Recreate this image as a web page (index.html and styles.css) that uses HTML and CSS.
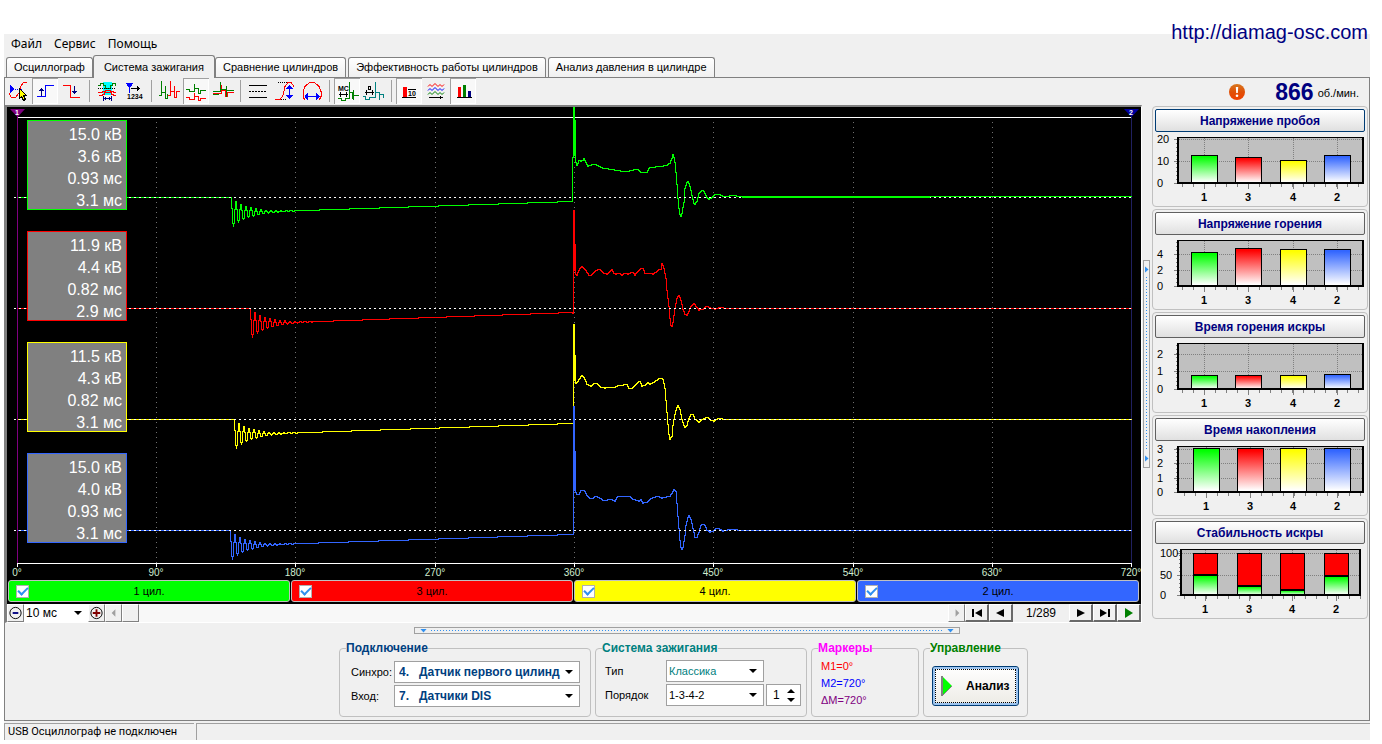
FILE: index.html
```html
<!DOCTYPE html>
<html lang="ru">
<head>
<meta charset="utf-8">
<title>USB Осциллограф</title>
<link rel="stylesheet" href="styles.css">
</head>
<body>
<div class="app">
  <a class="site-link" href="http://diamag-osc.com">http://diamag-osc.com</a>

  <nav class="menu">
    <button>Файл</button>
    <button>Сервис</button>
    <button>Помощь</button>
  </nav>

  <div class="tabs" role="tablist">
    <button class="tab" role="tab">Осциллограф</button>
    <button class="tab tab-active" role="tab" aria-selected="true">Система зажигания</button>
    <button class="tab" role="tab">Сравнение цилиндров</button>
    <button class="tab" role="tab">Эффективность работы цилиндров</button>
    <button class="tab" role="tab">Анализ давления в цилиндре</button>
  </div>

  <main class="page">
    <div class="toolbar">
      <div class="tools">
        <button class="tool" aria-label="Курсор"><svg viewBox="0 0 26 26"><path d="M5 7v8l5-4z" fill="#00f"/><path d="M10 11.500h8" stroke="#00f" stroke-dasharray="1 1"/><path d="M4 15l2 4h5l3-4 2-7 3-4h3" stroke="#f00"/><path d="M14.500 10.500v10l2-2 2 4 2-1-2-4h3z" fill="#ff0" stroke="#000"/></svg></button>
        <button class="tool pressed" aria-label="Фронт"><svg viewBox="0 0 26 26"><path d="M5 18.500h8.500v-11h8" stroke="#00f"/><path d="M9.500 18v-8M7 12.500h5M8 11.500h3" stroke="#000080"/></svg></button>
        <button class="tool" aria-label="Спад"><svg viewBox="0 0 26 26"><path d="M4 7.500h7.500v12h9" stroke="#f00"/><path d="M15.500 8v8M13 13.500h5M14 14.500h3" stroke="#000080"/></svg></button>
        <span class="sep"></span>
        <button class="tool" aria-label="Окно измерения"><svg viewBox="0 0 26 26"><path d="M9 4h9v13H9z" fill="#0ff"/><path d="M4 7.500h2v-2h3v2h2v3h5v-3h2v-2h3v2h1" stroke="#008000"/><path d="M4 10.500h18" stroke="#000" stroke-dasharray="1 1"/><path d="M4 14.500h4v-1h3v-1h5v1h3v1h3M5 17.500h3v-1h2v-2h7v2h2v1h3" stroke="#f00"/><path d="M9.500 18v5M17.500 18v5M10 20.500h7M11.500 19v3M15.500 19v3" stroke="#000080"/></svg></button>
        <button class="tool" aria-label="Нумерация"><svg viewBox="0 0 26 26"><path d="M5 5h7l-2 4H7z" fill="#00f"/><path d="M8.500 6v9" stroke="#00f"/><path d="M10 10.500h9M16.500 8v5M17.500 9v3" stroke="#000"/><text x="6" y="21" class="mini">1234</text></svg></button>
        <span class="sep"></span>
        <button class="tool" aria-label="Последовательно"><svg viewBox="0 0 26 26"><path d="M3 17.500h2.500V3v11.500h4V8v12.500h2v-5" stroke="#008000"/><path d="M12 17.500h2.500V3v10.500h4V8v11.500h2v-6h3" stroke="#f00"/></svg></button>
        <button class="tool pressed" aria-label="Каскад"><svg viewBox="0 0 26 26"><path d="M3 11.500h3v2h5.500V6v4.500h4v5h2v-3h5" stroke="#008000"/><path d="M3 19.500h3v2h5.500V15v3.500h4v4h2v-2h5" stroke="#f00"/></svg></button>
        <button class="tool" aria-label="Наложение"><svg viewBox="0 0 26 26"><path d="M3 15.500h8.500V7v5.500h4v6h2v-4h6" stroke="#f00"/><path d="M3 13.500h7.500V4v7.500h6v7v-11v5h7M3 16.500h6" stroke="#008000"/></svg></button>
        <span class="sep"></span>
        <button class="tool" aria-label="Линии"><svg viewBox="0 0 26 26"><path d="M4 7.500h18M4 19.500h18" stroke="#000"/><path d="M4 13.500h18" stroke="#000" stroke-dasharray="2 1"/></svg></button>
        <button class="tool" aria-label="Амплитуда"><svg viewBox="0 0 26 26"><path d="M6 4.500h10M5 21.500h10" stroke="#000" stroke-dasharray="1 1"/><path d="M3 21.500h5l3-4 2-9 3-4h3l3 4" stroke="#f00"/><path d="M17.500 7v14M14 10.500h7M15 9.500h5M16 8.500h3M14 17.500h7M15 18.500h5M16 19.500h3" stroke="#00f"/></svg></button>
        <button class="tool" aria-label="Длительность"><svg viewBox="0 0 26 26"><path d="M6 21.500l-1-1-1-2v-5l2-5 2-2 3-2h4l3 2 2 2 2 5v5l-1 2-1 1" stroke="#f00"/><path d="M6 18.500h15M8.500 15v7M7.500 16v5M6.500 17v3M17.500 15v7M18.500 16v5M19.500 17v3" stroke="#00f"/></svg></button>
        <span class="sep"></span>
        <button class="tool pressed" aria-label="Миллисекунды"><svg viewBox="0 0 26 26"><path d="M4 20.500h3v2h4v-2h4.500V4v10.500h3v6h1v-3h5M19.500 12v10" stroke="#008000"/><path d="M5 16.500h9M6.500 14v5M12.500 14v5" stroke="#000"/><text x="4" y="13" class="mini">МС</text></svg></button>
        <button class="tool" aria-label="Градусы"><svg viewBox="0 0 26 26"><path d="M2 18.500h2v3h4v-2h6.500V4v10.500h4v7v-5h4v3" stroke="#008080"/><path d="M4 14.500h9M5.500 12v5M11.500 12v5" stroke="#000"/><path d="M7.500 8.500h2v3h-2z" stroke="#000"/></svg></button>
        <span class="sep"></span>
        <button class="tool pressed" aria-label="Числа"><svg viewBox="0 0 26 26"><path d="M7 9h4v10H7z" fill="#f00"/><path d="M6 19.500h14M12 11.500h8" stroke="#000"/><text x="12" y="18" class="mini">10</text></svg></button>
        <button class="tool" aria-label="Кривые"><svg class="soft" viewBox="0 0 26 26"><path d="M5 8.500l2-2 2 2 3-3 3 3 2-2 2 2 2-2" stroke="#f00"/><path d="M5 12.500l2-2 2 2 3-3 3 3 2-2 2 2 2-2" stroke="#00f"/><path d="M5 16.500l2-2 2 2 3-3 3 3 2-2 2 2 2-2" stroke="#008000"/><path d="M6 19.500h14M17.500 18v3" stroke="#000"/></svg></button>
        <button class="tool pressed" aria-label="Гистограммы"><svg viewBox="0 0 26 26"><path d="M8 9h3v10H8z" fill="#f00"/><path d="M13 7h3v12h-3z" fill="#008000"/><path d="M18 13h3v6h-3z" fill="#000080"/><path d="M7 19.500h15" stroke="#000"/></svg></button>
      </div>
      <div class="rpm">
        <svg class="alert" viewBox="0 0 16 16"><defs><linearGradient id="alertFill" x1="0" y1="0" x2="0" y2="1"><stop offset="0" stop-color="#d87820"/><stop offset=".5" stop-color="#e05008"/><stop offset="1" stop-color="#f04000"/></linearGradient></defs><circle cx="8" cy="8" r="8" fill="url(#alertFill)"/><path d="M6.800 3h2.400l-.4 6H7.200z" fill="#fff"/><circle cx="8" cy="11.800" r="1.300" fill="#fff"/></svg>
        <strong>866</strong><span>об./мин.</span>
      </div>
    </div>

    <div class="workspace">
      <section class="scope">
        <div class="screen">
          <svg id="waves" class="waves" viewBox="7 107 1134 472"></svg>
          <div class="cylinders">
            <label class="cyl green"><input type="checkbox" checked><span>1 цил.</span></label>
            <label class="cyl red"><input type="checkbox" checked><span>3 цил.</span></label>
            <label class="cyl yellow"><input type="checkbox" checked><span>4 цил.</span></label>
            <label class="cyl blue"><input type="checkbox" checked><span>2 цил.</span></label>
          </div>
        </div>
        <div class="timeline">
          <button class="flat" aria-label="Уменьшить"><svg viewBox="0 0 16 16"><circle cx="8" cy="8" r="6" fill="none" stroke="#000"/><path d="M5 8h6" stroke="#000080" stroke-width="2"/></svg></button>
          <div class="combo scale"><select aria-label="Масштаб"><option>10 мс</option></select></div>
          <button class="flat" aria-label="Увеличить"><svg viewBox="0 0 16 16"><circle cx="8" cy="8" r="6" fill="none" stroke="#000"/><path d="M4 8h8M8 4v8" stroke="#800000" stroke-width="2"/></svg></button>
          <button class="flat" aria-label="Влево"><svg viewBox="0 0 16 16"><path d="M10 4v8L6 8z" fill="#a0a0a0"/></svg></button>
          <div class="track"><span class="thumb"></span></div>
          <button class="flat" aria-label="Вправо"><svg viewBox="0 0 16 16"><path d="M7 4v8l4-4z" fill="#a0a0a0"/></svg></button>
          <button class="nav" aria-label="Первый"><svg viewBox="0 0 16 16"><path d="M3 4h2v8H3zM13 4v8L6 8z"/></svg></button>
          <button class="nav" aria-label="Предыдущий"><svg viewBox="0 0 16 16"><path d="M11 4v8L3 8z"/></svg></button>
          <output class="counter">1/289</output>
          <button class="nav" aria-label="Следующий"><svg viewBox="0 0 16 16"><path d="M4 4v8l8-4z"/></svg></button>
          <button class="nav" aria-label="Последний"><svg viewBox="0 0 16 16"><path d="M3 4v8l7-4zM11 4h2v8h-2z"/></svg></button>
          <button class="nav" aria-label="Пуск"><svg viewBox="0 0 16 16"><path d="M4 3v10l8-5z" fill="#008000"/></svg></button>
        </div>
      </section>

      <div class="splitter-v"><i></i><b></b><i></i></div>

      <aside id="charts" class="charts"></aside>
    </div>

    <div class="splitter-h"><i></i><b></b><i></i></div>

    <form class="panels">
      <fieldset class="connect">
        <legend>Подключение</legend>
        <div class="fields">
          <label for="sync">Синхро:</label>
          <div class="combo"><select id="sync"><option>4. &nbsp; Датчик первого цилинд</option></select></div>
          <label for="input">Вход:</label>
          <div class="combo"><select id="input"><option>7. &nbsp; Датчики DIS</option></select></div>
        </div>
      </fieldset>
      <fieldset class="ignition">
        <legend>Система зажигания</legend>
        <div class="fields">
          <label for="kind">Тип</label>
          <div class="combo kind"><select id="kind"><option>Классика</option></select></div>
          <label for="order">Порядок</label>
          <div class="pair">
            <div class="combo"><select id="order"><option>1-3-4-2</option></select></div>
            <div class="spin"><input type="text" value="1" aria-label="Номер цилиндра"><svg viewBox="0 0 9 16"><path d="M0 6h8L4 2zM0 11h8l-4 4z"/></svg></div>
          </div>
        </div>
      </fieldset>
      <fieldset class="markers">
        <legend>Маркеры</legend>
        <p class="m1">M1=0°</p>
        <p class="m2">M2=720°</p>
        <p class="dm">ΔM=720°</p>
      </fieldset>
      <fieldset class="control">
        <legend>Управление</legend>
        <button type="button" class="analyze"><svg viewBox="0 0 12 20"><path d="M1 0v20" stroke="#808080" stroke-width="2"/><path d="M2 1v18l9-9z" fill="#0f0"/><path d="M2 19l9-9" stroke="#808080"/></svg><span>Анализ</span></button>
      </fieldset>
    </form>
  </main>

  <footer class="status">
    <div class="cell">USB Осциллограф не подключен</div>
    <div class="cell rest"></div>
  </footer>
</div>
<script src="script.js"></script>
</body>
</html>
```
FILE: styles.css
```css
* { box-sizing: border-box; }

body {
  margin: 0;
  padding: 34px 12px 4px 4px;
  background: #fff;
  color: #000;
  font: 11px/14px "Liberation Sans", Arial, sans-serif;
}

button, select, input { font: inherit; color: inherit; }
button { padding: 0; margin: 0; }

.app {
  position: relative;
  min-width: 1100px;
  background: #f0f0f0;
}

.site-link {
  position: absolute;
  right: 2px;
  top: -14px;
  font-size: 20px;
  line-height: 24px;
  color: #000080;
  text-decoration: none;
}

/* menu and tabs */
.menu {
  display: flex;
  gap: 12px;
  height: 20px;
  padding: 0 7px;
}
.menu button {
  border: 0;
  background: none;
  font: 12px/20px "Noto Sans", sans-serif;
}

.tabs {
  display: flex;
  align-items: flex-end;
  height: 23px;
  padding-left: 2px;
}
.tab {
  height: 20px;
  margin-right: 2px;
  padding: 0 7px;
  border: 1px solid #808080;
  border-bottom: 0;
  border-radius: 3px 3px 0 0;
  background: linear-gradient(#fff, #f0f0f0);
  line-height: 19px;
}
.tab:first-child { margin-right: 0; }
.tab-active {
  position: relative;
  height: 23px;
  margin: 0 0 -1px;
  padding: 0 10px;
  background: #f0f0f0;
}

.page { border: 1px solid #808080; padding-bottom: 3px; }

/* toolbar */
.toolbar {
  display: flex;
  justify-content: space-between;
  height: 27px;
}
.tools { display: flex; gap: 1px; }
.tool {
  width: 26px;
  height: 26px;
  border: 0;
  background: none;
}
.tool svg { display: block; width: 26px; height: 26px; fill: none; shape-rendering: crispEdges; }
.tool .soft { shape-rendering: auto; }
.pressed {
  background: #f8f8f8;
  box-shadow: inset 1px 1px #a0a0a0, inset -1px -1px #fff;
}
.sep {
  width: 7px;
  height: 22px;
  margin-top: 2px;
  background: linear-gradient(#a0a0a0, #a0a0a0) 3px 0 / 1px 100% no-repeat;
}
.mini { font: bold 7px "Liberation Sans", sans-serif; fill: #000; }

.rpm {
  display: flex;
  align-items: center;
  padding-right: 10px;
}
.alert { width: 16px; height: 16px; margin-right: 30px; }
.rpm strong {
  margin-right: 4px;
  color: #000080;
  font-size: 23px;
  line-height: 26px;
}
.rpm span { padding-top: 3px; }

/* oscilloscope */
.workspace { display: flex; }
.scope {
  flex: 1;
  min-width: 0;
  border: solid #808080;
  border-width: 2px 1px 1px 2px;
  border-right-color: #fff;
  border-bottom-color: #fff;
}
.screen { background: #000; }
.waves { display: block; width: 100%; }
.waves path, .waves rect { shape-rendering: crispEdges; fill: none; }
.waves .solid { fill: #808080; }
.waves text { font-family: "Liberation Sans", Arial, sans-serif; }
.reading { font-size: 16px; fill: #fff; text-anchor: end; }
.degree { font-size: 10px; fill: #d0ecd0; text-anchor: middle; }
.flag { font-size: 7px; font-weight: bold; fill: #fff; text-anchor: middle; }

.cylinders {
  display: grid;
  grid-template-columns: repeat(4, 1fr);
  gap: 1px;
  padding: 1px 2px 2px 1px;
}
.cyl {
  display: flex;
  align-items: center;
  height: 22px;
  padding: 0 7px;
  border: 1px solid #c0c0c0;
  border-radius: 3px;
}
.cyl span { flex: 1; padding-right: 13px; text-align: center; }
.cyl input {
  appearance: none;
  display: grid;
  place-items: center;
  width: 13px;
  height: 13px;
  margin: 0;
  border: 1px solid #b0b0b0;
  background: #fff;
}
.cyl input:checked::after {
  content: "";
  width: 8px;
  height: 4px;
  margin-bottom: 3px;
  border: solid #3090f0;
  border-width: 0 0 2px 2px;
  rotate: -45deg;
}
.green { background: #0f0; }
.red { background: #f00; }
.yellow { background: #ff0; }
.blue { background: #36f; }

.timeline { display: flex; height: 18px; }
.flat, .nav, .thumb {
  border: 1px solid;
  border-color: #fff #808080 #808080 #fff;
  background: #f0f0f0;
}
.flat { width: 17px; }
.nav {
  width: 24px;
  border-width: 1px 2px 2px 1px;
  border-color: #fff #696969 #696969 #fff;
}
.flat svg, .nav svg { display: block; width: 16px; height: 16px; margin: auto; }
.flat svg { width: 15px; }
.thumb { display: block; width: 17px; height: 18px; }
.track { flex: 1; background: #f8f8f8; }
.counter {
  width: 56px;
  background: #f0f0f0;
  text-align: center;
  font-size: 12px;
  line-height: 18px;
}

/* drop-downs */
.combo {
  position: relative;
  display: flex;
  height: 22px;
  border: 1px solid #a0a0a0;
  background: #fff;
}
.combo select {
  appearance: none;
  width: 100%;
  padding: 0 18px 0 4px;
  border: 0;
  border-radius: 0;
  background: none;
  outline: 0;
}
.combo::after {
  content: "";
  position: absolute;
  right: 6px;
  top: 8px;
  width: 8px;
  height: 4px;
  background: #000;
  clip-path: polygon(0 0, 100% 0, 50% 100%);
  pointer-events: none;
}
.scale { width: 64px; height: 18px; border: 0; font-size: 12px; }
.scale select { padding-left: 2px; }
.scale::after { top: 7px; }

/* splitters */
.splitter-v, .splitter-h {
  display: flex;
  align-items: center;
  border: 1px solid #a0a0a0;
}
.splitter-v {
  flex-direction: column;
  align-self: center;
  width: 7px;
  height: 208px;
  margin: 0 2px 0 1px;
  padding: 5px 0;
}
.splitter-h {
  width: 546px;
  height: 7px;
  margin: 4px auto 0;
  padding: 0 5px;
}
.splitter-v b { flex: 1; width: 1px; margin: 4px 0; background: repeating-linear-gradient(#3090f0 0 1px, transparent 1px 3px); }
.splitter-h b { flex: 1; height: 1px; margin: 0 4px; background: repeating-linear-gradient(90deg, #3090f0 0 1px, transparent 1px 3px); }
.splitter-v i { width: 4px; height: 7px; background: #3090f0; clip-path: polygon(0 0, 100% 50%, 0 100%); }
.splitter-h i { width: 7px; height: 4px; background: #3090f0; clip-path: polygon(0 0, 100% 0, 50% 100%); }

/* bar charts */
.charts {
  display: flex;
  flex-direction: column;
  gap: 2px;
  width: 216px;
  margin: 1px 1px 0 0;
}
.chart {
  height: 101px;
  padding-top: 2px;
  border: 1px solid #c0c0c0;
  border-radius: 4px;
}
.chart button {
  display: block;
  width: 210px;
  height: 23px;
  margin: 0 auto;
  border: 1px solid #606060;
  border-radius: 2px;
  background: linear-gradient(#fff, #e0e0e0);
  color: #000080;
  font-size: 12px;
  font-weight: bold;
}
.chart:first-child button { border-color: #003c74; }
.chart svg { display: block; width: 214px; height: 73px; shape-rendering: crispEdges; }
.chart text { font-size: 11px; fill: #000; }
.chart .cat { font-weight: bold; text-anchor: middle; }

/* bottom panels */
.panels {
  display: flex;
  justify-content: center;
  gap: 4px;
  padding: 7px 7px 0 0;
}
fieldset {
  min-width: 0;
  height: 76px;
  margin: 0;
  padding: 6px 10px 0 11px;
  border: 1px solid #c0c0c0;
  border-radius: 4px;
}
legend {
  margin-left: -5px;
  padding: 0;
  font-weight: bold;
  font-size: 12px;
  line-height: 14px;
  white-space: nowrap;
}
.fields {
  display: grid;
  align-items: center;
  gap: 2px 0;
}
.connect { width: 252px; }
.connect .fields { grid-template-columns: 43px 1fr; }
.connect legend { color: #004080; }
.connect select { font-weight: bold; font-size: 12px; color: #004080; }
.ignition { width: 212px; padding: 5px 5px 0 9px; }
.ignition legend { margin-left: -3px; color: #008080; }
.ignition .fields { grid-template-columns: 61px 1fr; }
.ignition select { padding-left: 2px; }
.kind { width: 98px; }
.kind select { color: #008080; }
.pair { display: flex; gap: 2px; }
.pair .combo { flex: 1; }
.spin {
  display: flex;
  align-items: center;
  width: 35px;
  height: 22px;
  border: 1px solid #a0a0a0;
  background: #fff;
}
.spin input { width: 20px; padding: 0 0 0 6px; border: 0; font-size: 12px; outline: 0; }
.spin svg { width: 9px; height: 16px; }
.markers { width: 108px; padding: 4px 9px 0; }
.markers legend { margin-left: -3px; color: #f0f; }
.markers p { margin: 0 0 3px; }
.m1 { color: #f00; }
.m2 { color: #00f; }
.dm { color: #800080; }
.control { width: 105px; padding: 11px 8px 0; }
.control legend { margin-left: -2px; color: #008000; }
.analyze {
  display: flex;
  align-items: center;
  gap: 13px;
  width: 87px;
  height: 40px;
  padding: 0 8px;
  border: 1px solid #003c74;
  border-radius: 3px;
  outline: 1px dotted #000;
  outline-offset: -4px;
  background: linear-gradient(#fff, #ecebe5);
  box-shadow: inset 0 0 0 2px #9cc4f0;
  font-size: 12px;
  font-weight: bold;
}
.analyze svg { width: 12px; height: 20px; }

/* status bar */
.status { display: flex; gap: 2px; margin-top: 2px; }
.cell {
  width: 190px;
  height: 17px;
  padding-left: 3px;
  border: solid #a0a0a0;
  border-width: 1px 0 0 1px;
  font: 11px/15px Roboto, sans-serif;
  white-space: nowrap;
}
.rest { flex: 1; }
```
FILE: script.js
```js
// ---- oscilloscope screen ----
const LEFT = 17, RIGHT = 1131, STEP = 139.3;
const gridX = i => Math.floor(LEFT + 0.2 + i * STEP) + 0.5;

const traces = [
  { color: '#00ff00', base: 197.5, start: 230, tail: 196.5, cover: true, values: ['15.0 кВ', '3.6 кВ', '0.93 мс', '3.1 мс'],
    burn: '572,201 572.5,157 573.5,157 573.5,107 574.5,107 574.5,155 575.5,119 575.5,162 576,165 577,163 578,160 580,161 582,160 583,158 585,162 587,166 590,165 594,164 598,166 602,168 608,169 614,170 620,171 628,171 632,170 637,169 640,172 646,172 648,168 654,167 662,166 666,165 669,163 671,158 672.5,154 673.5,157 674,162 675,172 676,184 677,198 678,208 679,214 680,216 681,213 683,202 684.5,188 686,182 687.5,181 689,186 691,195 693,203 694,204 696,201 698,193 700,191 702,190 704,193 706,197 708,199 710,198 713,195 716,194 720,195 724,197 730,195.5 742,196.5' },
  { color: '#ff0000', base: 308.5, start: 249, tail: 308.5, values: ['11.9 кВ', '4.4 кВ', '0.82 мс', '2.9 мс'],
    burn: '572,313 573,308 573.5,210 574.5,210 574.5,270 575.5,243 575.5,274 576,275 577,272 579,268 581,266.5 583,268 586,272 588,275 590,275 593,272 596,270 599,269 601,271 603,273 606,274 608,272 611,269 613,273 615,274 618,273 621,275 624,273 627,274 629,273 632,272 634,275 636,272 639,269 642,268 644,273 648,273 652,274 655,272 657,270 660,269 661,263 663,268 665,278 666,290 668,306 669,318 670,325 671,326 672,322 674,308 676,298 678,295 680,300 682,309 684,314 686,315 688,311 690,306 693,303 695,306 698,310 702,309 706,306 710,308 714,309 720,307 724,308.5' },
  { color: '#ffff00', base: 419.5, start: 233, tail: 419.5, values: ['11.5 кВ', '4.3 кВ', '0.82 мс', '3.1 мс'],
    burn: '572,423 573.5,423 573.5,324 574.5,324 574.5,380 575.5,354 575.5,383 577,381 579,378 581,375 583,377 586,384 590,386 593,383 597,384 600,387 604,388 608,387 614,387 618,385 622,385 626,384 628,388 631,388 635,384 639,381 641,386 644,385 647,382 649,384 653,382 656,380 659,378 662,379 664,388 665,400 666,412 667,424 668,434 669,439 671,436 672,425 674,414 676,407 677.5,405 679,409 681,419 683,425 684.5,427 686,425 688,418 690,414 692,414 694,419 698,422 702,419 706,417 710,420 713,421 718,418 723,419.5' },
  { color: '#3366ff', base: 530.5, start: 229, tail: 530.5, values: ['15.0 кВ', '4.0 кВ', '0.93 мс', '3.1 мс'],
    burn: '572,534 573,530 573.5,406 574.5,406 574.5,490 575.5,450 575.5,492 576,494 578,494 580,490 583,490 586,495 589,498 592,498 595,496 599,498 602,500 606,500 610,499 614,501 616,497 620,496 629,496 632,499 638,501 640,499 642,503 646,502 649,499 654,497 657,496 661,498 665,497 669,496 671,493 673,489 675,491 676,503 677,516 678,528 679,540 680,547 681,549 682,547 684,535 685,525 687,517 688,515 690,519 692,528 694,537 696,537 698,532 700,525 702,524 704,525 706,530 709,532 712,531 715,528 719,529 722,531 730,529 740,530.5' }
];

// Coil charge: ringing after switch-on, then a slow linear rise.
function charge(t) {
  const points = [[LEFT, t.base], [t.start, t.base]];
  const end = 572, first = t.base + 15.5, last = t.base + 4;
  for (let x = t.start + 1; x < end; x += 0.5) {
    const d = x - t.start;
    const level = first + (last - first) * d / (end - t.start);
    const ring = 16 * Math.exp(-d / 16) * Math.cos(2 * Math.PI * (d - 3) / 5);
    points.push([x, level + ring]);
  }
  return points;
}

// Join the samples column by column, as a raster display does.
function stepped(points) {
  const snap = v => Math.floor(v) + 0.5;
  let [px, py] = points[0];
  let d = `M${snap(px)} ${snap(py)}`, lastY = snap(py);
  for (const [x, y] of points.slice(1)) {
    const from = snap(px), to = snap(x);
    for (let c = from + 1; c < to; c++) {
      const cy = snap(py + (y - py) * (c - from) / (to - from));
      if (cy !== lastY) { d += `H${c}V${cy}`; lastY = cy; }
    }
    d += `H${to}V${snap(y)}`;
    lastY = snap(y);
    px = x; py = y;
  }
  return d;
}

let screen = '';
for (let i = 1; i < 8; i++) {
  screen += `<path d="M${gridX(i)} 122V563" stroke="#707070" stroke-dasharray="1 4"/>`;
}
screen += '<path d="M17 117.500H1131M17 563.500H1131" stroke="#fff"/>';
screen += '<path d="M17.500 112V563" stroke="#800080"/><path d="M1131.500 112V563" stroke="#202060"/>';

for (const t of traces) {
  const points = charge(t)
    .concat(t.burn.split(' ').map(p => p.split(',').map(Number)))
    .concat([[RIGHT, t.tail]]);
  screen += `<path d="${stepped(points)}" stroke="${t.color}"/>`;
  screen += `<path d="M14 ${t.base}H1134" stroke="#fff" stroke-dasharray="2 3"/>`;
  if (t.cover) screen += `<path d="M742 ${t.base}H930" stroke="${t.color}"/>`;
  screen += `<rect class="solid" x="27.5" y="${t.base - 77}" width="99" height="89" rx="1" stroke="${t.color}"/>`;
  t.values.forEach((v, i) => {
    screen += `<text class="reading" x="122" y="${t.base - 57.5 + 22 * i}">${v}</text>`;
  });
}
for (let i = 0; i <= 8; i++) {
  const x = gridX(i);
  screen += `<path d="M${x} 563V567" stroke="#fff"/><text class="degree" x="${Math.floor(x)}" y="576">${i * 90}°</text>`;
}
screen += '<polygon points="10,109 25,109 17.500,117" fill="#800080"/><text class="flag" x="17" y="115">1</text>';
screen += '<polygon points="1124,109 1139,109 1131.500,117" fill="#0000a0"/><text class="flag" x="1131" y="115">2</text>';
document.getElementById('waves').innerHTML = screen;

// ---- bar charts ----
const colors = ['#00ff00', '#ff0000', '#ffff00', '#3366ff'];
const names = ['1', '3', '4', '2'];
const charts = [
  { title: 'Напряжение пробоя', axis: [[20, 7], [10, 29], [0, 51]], tops: [23, 25, 28, 23], xs: [38, 82, 127, 171] },
  { title: 'Напряжение горения', axis: [[4, 19], [2, 35], [0, 51]], tops: [17, 13, 14, 14], xs: [38, 82, 127, 171] },
  { title: 'Время горения искры', axis: [[2, 16], [1, 33], [0, 51]], tops: [37, 37, 37, 36], xs: [38, 82, 127, 171] },
  { title: 'Время накопления', axis: [[3, 8], [2, 22], [1, 37], [0, 51]], tops: [7, 7, 7, 7], xs: [40, 84, 127, 171] },
  { title: 'Стабильность искры', axis: [[100, 9], [50, 31], [0, 51]], tops: [31, 42, 46, 32], xs: [40, 84, 127, 171],
    stacked: true, left: 27, right: 208, width: 25, labelX: 7 }
];

function drawChart(c, n) {
  const left = c.left || 24, right = c.right || 211, width = c.width || 27, labelX = c.labelX || 4;
  let s = '<defs>';
  colors.forEach((color, i) => {
    const top = c.stacked ? '#00ff00' : color;
    s += `<linearGradient id="g${n}${i}" x1="0" y1="0" x2="0" y2="1"><stop offset=".05" stop-color="${top}"/><stop offset=".95" stop-color="#fff"/></linearGradient>`;
  });
  s += `</defs><rect x="${left}" y="5" width="${right - left}" height="46" fill="#c0c0c0"/>`;
  for (let y = 51; y > 6; y -= 4) s += `<path d="M${left - 1} ${y}.5h1" stroke="#808080"/>`;
  for (const [value, y] of c.axis) {
    s += `<path d="M${left - 3} ${y}.5h3" stroke="#808080"/>`;
    if (value) s += `<path d="M${left} ${y}.5H${right}" stroke="#808080" stroke-dasharray="1 1"/>`;
    s += `<text x="${labelX}" y="${y + 4}">${value}</text>`;
  }
  for (let x = c.xs[0] - 9; x < right; x += 11) s += `<path d="M${x}.5 52v3" stroke="#808080"/>`;
  c.xs.forEach((x, i) => {
    const mid = x + (width - 1) / 2, top = c.tops[i];
    s += `<path d="M${mid + 0.5} 6V51" stroke="#808080" stroke-dasharray="1 1"/><path d="M${mid + 0.5} 52v5" stroke="#808080"/>`;
    if (c.stacked) s += `<rect x="${x + 0.5}" y="9.5" width="${width - 1}" height="42" fill="#f00" stroke="#000"/>`;
    s += `<rect x="${x + 0.5}" y="${top + 0.5}" width="${width - 1}" height="${51 - top}" fill="url(#g${n}${i})" stroke="#000"/>`;
    if (c.stacked) s += `<path d="M${x} ${top}h${width}" stroke="#000" stroke-width="2"/>`;
    s += `<text class="cat" x="${mid}" y="69">${names[i]}</text>`;
  });
  s += `<path d="M${left} 5.5H${right}" stroke="#000"/><path d="M${left + 1} 5V51H${right - 1}V5" fill="none" stroke="#000" stroke-width="2"/>`;
  return `<section class="chart"><button>${c.title}</button><svg viewBox="0 0 214 73">${s}</svg></section>`;
}
document.getElementById('charts').innerHTML = charts.map(drawChart).join('');
```
